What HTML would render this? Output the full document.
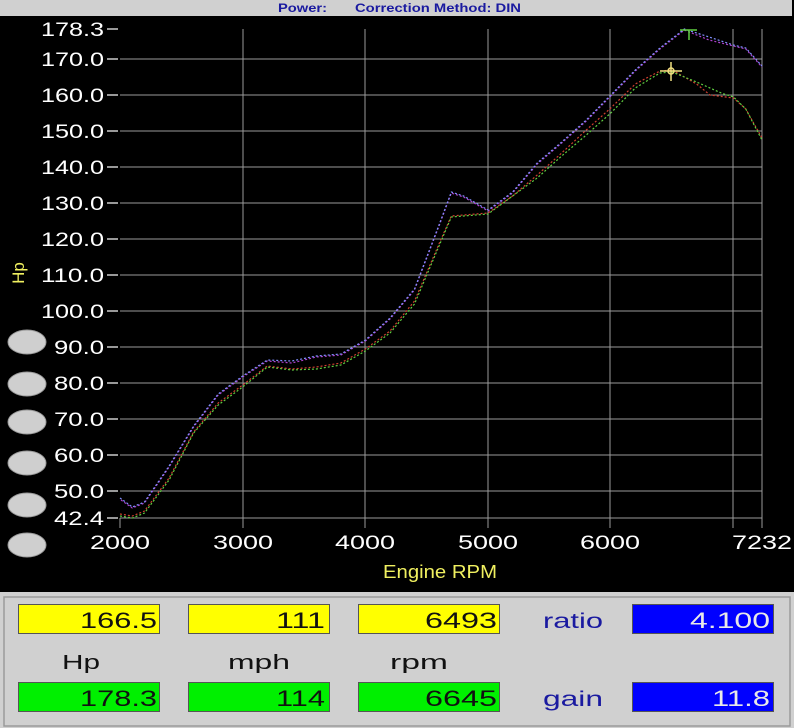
<!DOCTYPE html>
<html><head><meta charset="utf-8"><style>
html,body{margin:0;padding:0;width:794px;height:728px;overflow:hidden;background:#000;font-family:"Liberation Sans",Arial,sans-serif;}
svg{display:block}
</style></head><body>
<svg width="794" height="728" viewBox="0 0 794 728" xmlns="http://www.w3.org/2000/svg" font-family="Liberation Sans, Arial, sans-serif">
<rect x="0" y="0" width="794" height="728" fill="#000"/>
<rect x="0" y="0" width="792" height="16" fill="#d0d0d0"/>
<text x="278" y="12" font-size="12" font-weight="bold" fill="#1a1aa0" textLength="49" lengthAdjust="spacingAndGlyphs">Power:</text>
<text x="355" y="12" font-size="12" font-weight="bold" fill="#1a1aa0" textLength="166" lengthAdjust="spacingAndGlyphs">Correction Method: DIN</text>

<g stroke="#9a9a9a" stroke-width="1">
<line x1="120" y1="59" x2="762" y2="59"/><line x1="120" y1="95" x2="762" y2="95"/>
<line x1="120" y1="131" x2="762" y2="131"/><line x1="120" y1="167" x2="762" y2="167"/>
<line x1="120" y1="203" x2="762" y2="203"/><line x1="120" y1="239" x2="762" y2="239"/>
<line x1="120" y1="275" x2="762" y2="275"/><line x1="120" y1="311" x2="762" y2="311"/>
<line x1="120" y1="347" x2="762" y2="347"/><line x1="120" y1="383" x2="762" y2="383"/>
<line x1="120" y1="419" x2="762" y2="419"/><line x1="120" y1="455" x2="762" y2="455"/>
<line x1="120" y1="491" x2="762" y2="491"/><line x1="120" y1="518" x2="762" y2="518"/>
<line x1="243" y1="29" x2="243" y2="528"/><line x1="365" y1="29" x2="365" y2="528"/>
<line x1="488" y1="29" x2="488" y2="528"/><line x1="610" y1="29" x2="610" y2="528"/>
<line x1="733" y1="29" x2="733" y2="528"/><line x1="762" y1="29" x2="762" y2="528"/>
<line x1="120" y1="518" x2="120" y2="528"/>
</g>
<g stroke="#fff" stroke-width="1.2">
<line x1="107" y1="29" x2="118" y2="29"/><line x1="107" y1="59" x2="118" y2="59"/><line x1="107" y1="95" x2="118" y2="95"/>
<line x1="107" y1="131" x2="118" y2="131"/><line x1="107" y1="167" x2="118" y2="167"/><line x1="107" y1="203" x2="118" y2="203"/>
<line x1="107" y1="239" x2="118" y2="239"/><line x1="107" y1="275" x2="118" y2="275"/><line x1="107" y1="311" x2="118" y2="311"/>
<line x1="107" y1="347" x2="118" y2="347"/><line x1="107" y1="383" x2="118" y2="383"/><line x1="107" y1="419" x2="118" y2="419"/>
<line x1="107" y1="455" x2="118" y2="455"/><line x1="107" y1="491" x2="118" y2="491"/><line x1="107" y1="518" x2="118" y2="518"/>
</g>
<g fill="#fff" font-size="19" text-anchor="end" lengthAdjust="spacingAndGlyphs">
<text x="104" y="36" textLength="63" lengthAdjust="spacingAndGlyphs">178.3</text>
<text x="104" y="66" textLength="63" lengthAdjust="spacingAndGlyphs">170.0</text>
<text x="104" y="102" textLength="63" lengthAdjust="spacingAndGlyphs">160.0</text>
<text x="104" y="138" textLength="63" lengthAdjust="spacingAndGlyphs">150.0</text>
<text x="104" y="174" textLength="63" lengthAdjust="spacingAndGlyphs">140.0</text>
<text x="104" y="210" textLength="63" lengthAdjust="spacingAndGlyphs">130.0</text>
<text x="104" y="246" textLength="63" lengthAdjust="spacingAndGlyphs">120.0</text>
<text x="104" y="282" textLength="63" lengthAdjust="spacingAndGlyphs">110.0</text>
<text x="104" y="318" textLength="63" lengthAdjust="spacingAndGlyphs">100.0</text>
<text x="104" y="354" textLength="50" lengthAdjust="spacingAndGlyphs">90.0</text>
<text x="104" y="390" textLength="50" lengthAdjust="spacingAndGlyphs">80.0</text>
<text x="104" y="426" textLength="50" lengthAdjust="spacingAndGlyphs">70.0</text>
<text x="104" y="462" textLength="50" lengthAdjust="spacingAndGlyphs">60.0</text>
<text x="104" y="498" textLength="50" lengthAdjust="spacingAndGlyphs">50.0</text>
<text x="104" y="525" textLength="50" lengthAdjust="spacingAndGlyphs">42.4</text>
</g>
<g fill="#fff" font-size="19">
<text x="90" y="549" textLength="60" lengthAdjust="spacingAndGlyphs">2000</text>
<text x="213" y="549" textLength="60" lengthAdjust="spacingAndGlyphs">3000</text>
<text x="335" y="549" textLength="60" lengthAdjust="spacingAndGlyphs">4000</text>
<text x="458" y="549" textLength="60" lengthAdjust="spacingAndGlyphs">5000</text>
<text x="580" y="549" textLength="60" lengthAdjust="spacingAndGlyphs">6000</text>
<text x="732" y="549" textLength="60" lengthAdjust="spacingAndGlyphs">7232</text>
</g>
<text x="383" y="578" font-size="18" fill="#f0f060" textLength="114" lengthAdjust="spacingAndGlyphs">Engine RPM</text>
<text transform="translate(24,273) rotate(-90)" font-size="17" fill="#f0f060" text-anchor="middle">Hp</text>

<g fill="#cfcfcf" stroke="#9a9a9a" stroke-width="1">
<ellipse cx="27" cy="342" rx="19" ry="12"/><ellipse cx="27" cy="384" rx="19" ry="12"/>
<ellipse cx="27" cy="422" rx="19" ry="12"/><ellipse cx="27" cy="463" rx="19" ry="12"/>
<ellipse cx="27" cy="505" rx="19" ry="12"/><ellipse cx="27" cy="545" rx="19" ry="12"/>
</g>

<g fill="none" stroke-width="1.2" stroke-dasharray="2 2" stroke-linejoin="round">
<polyline stroke="#b040d0" points="121,500 132.3,508 144.5,503 169.1,467 193.6,427 218.2,395 242.7,377 267.3,361 291.8,363 316.3,357 340.9,355 365.4,341 390,319 414.5,290 439,226 451.3,193 463.6,197 488.1,211 512.6,193 537.2,164 561.7,143 586.3,121 610.8,96 635.3,71 659.9,49 684.4,30 709,40 733.5,46 745.8,49 762,67"/>
<polyline stroke="#8090ff" points="120,498 132.3,507 144.5,502 169.1,466 193.6,426 218.2,394 242.7,376 267.3,360 291.8,361 316.3,356 340.9,354 365.4,340 390,318 414.5,289 439,225 451.3,192 463.6,196 488.1,210 512.6,192 537.2,163 561.7,142 586.3,120 610.8,95 635.3,70 659.9,48 684.4,29 709,37 733.5,45 745.8,48 762,66"/>
<polyline stroke="#d04030" points="120,514 132.3,516 144.5,511 169.1,478 193.6,432 218.2,403 242.7,385 267.3,366 291.8,369 316.3,367 340.9,363 365.4,349 390,331 414.5,301 439,244 451.3,216 463.6,215 488.1,213 512.6,196 537.2,175 561.7,153 586.3,130 610.8,108 635.3,84 659.9,71 672,70 696.6,84 710,95 733.5,98 745.8,109 762,138"/>
<polyline stroke="#60d040" points="120,516 132.3,518 144.5,513 169.1,480 193.6,433 218.2,405 242.7,387 267.3,367 291.8,370 316.3,369 340.9,365 365.4,351 390,333 414.5,304 439,246 451.3,217 463.6,216 488.1,214 512.6,196 537.2,178 561.7,156 586.3,135 610.8,113 635.3,88 659.9,73 672,72 696.6,82 721.2,93 733.5,97 745.8,109 762,140"/>
</g>
<g stroke="#60d040" stroke-width="1.5"><line x1="680" y1="30" x2="697" y2="30"/><line x1="689" y1="30" x2="689" y2="40"/></g>
<g stroke="#f0e080" stroke-width="1.5" fill="none"><circle cx="671" cy="71" r="3"/><line x1="660" y1="71" x2="682" y2="71"/><line x1="671" y1="62" x2="671" y2="81"/></g>

<rect x="0" y="592" width="794" height="136" fill="#d0d0d0"/>
<rect x="4" y="597" width="786" height="129" fill="none" stroke="#9a9a9a" stroke-width="1.5"/>
<g stroke="#555" stroke-width="1">
<rect x="18.5" y="604.5" width="141" height="29" fill="#ffff00"/>
<rect x="188.5" y="604.5" width="141" height="29" fill="#ffff00"/>
<rect x="358.5" y="604.5" width="141" height="29" fill="#ffff00"/>
<rect x="18.5" y="682.5" width="141" height="29" fill="#00f000"/>
<rect x="188.5" y="682.5" width="141" height="29" fill="#00f000"/>
<rect x="358.5" y="682.5" width="141" height="29" fill="#00f000"/>
<rect x="632.5" y="604.5" width="141" height="29" fill="#0000ff"/>
<rect x="632.5" y="682.5" width="141" height="29" fill="#0000ff"/>
</g>
<g font-size="22" fill="#111">
<text x="80" y="628" textLength="77" lengthAdjust="spacingAndGlyphs">166.5</text>
<text x="276" y="628" textLength="49" lengthAdjust="spacingAndGlyphs">111</text>
<text x="425" y="628" textLength="72" lengthAdjust="spacingAndGlyphs">6493</text>
<text x="80" y="706" textLength="77" lengthAdjust="spacingAndGlyphs">178.3</text>
<text x="276" y="706" textLength="49" lengthAdjust="spacingAndGlyphs">114</text>
<text x="425" y="706" textLength="72" lengthAdjust="spacingAndGlyphs">6645</text>
</g>
<g font-size="22" fill="#e8e8e8">
<text x="690" y="628" textLength="80" lengthAdjust="spacingAndGlyphs">4.100</text>
<text x="712" y="706" textLength="58" lengthAdjust="spacingAndGlyphs">11.8</text>
</g>
<g font-size="20" fill="#111">
<text x="62" y="669" textLength="38" lengthAdjust="spacingAndGlyphs">Hp</text>
<text x="228" y="669" textLength="62" lengthAdjust="spacingAndGlyphs">mph</text>
<text x="390" y="669" textLength="58" lengthAdjust="spacingAndGlyphs">rpm</text>
</g>
<g font-size="21" fill="#1a1aa0">
<text x="543" y="628" textLength="60" lengthAdjust="spacingAndGlyphs">ratio</text>
<text x="543" y="706" textLength="60" lengthAdjust="spacingAndGlyphs">gain</text>
</g>
</svg>
</body></html>
